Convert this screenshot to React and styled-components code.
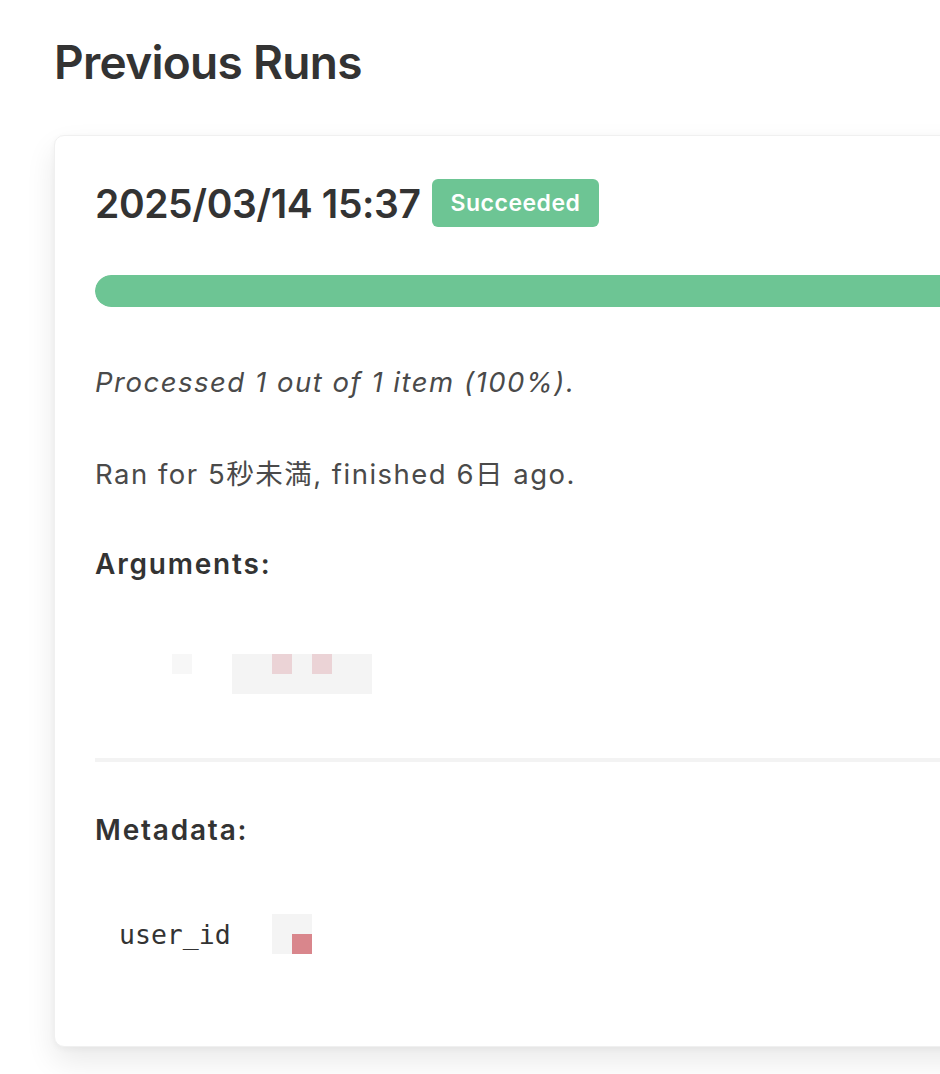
import React from 'react'
import styled, { createGlobalStyle } from 'styled-components'

const GlobalStyle = createGlobalStyle`
  html, body {
    margin: 0;
    padding: 0;
    background: #fff;
  }
  body {
    font-family: Inter, "Noto Sans", "Noto Sans CJK JP", sans-serif;
    color: #333;
    overflow: hidden;
  }
`

const Page = styled.div`
  padding: 0 0 60px 54px;
  overflow: hidden;
`

const PageTitle = styled.h2`
  margin: 0;
  padding-top: 34px;
  font-size: 46px;
  line-height: 56px;
  font-weight: 600;
  letter-spacing: -0.7px;
  color: #333;
`

const Card = styled.section`
  margin-top: 45px;
  width: 1000px;
  padding: 43px 40px 92px;
  background: #fff;
  border: 1px solid #f0f0f0;
  border-radius: 10px;
  box-shadow: 0 14px 30px rgba(0, 0, 0, 0.09), 0 2px 6px rgba(0, 0, 0, 0.04);
  box-sizing: border-box;
`

const RunHeader = styled.div`
  display: flex;
  align-items: center;
  gap: 11px;
`

const RunTime = styled.h3`
  margin: 0;
  font-size: 39px;
  font-weight: 600;
  letter-spacing: -0.4px;
  color: #333;
`

const StatusBadge = styled.span`
  display: inline-flex;
  align-items: center;
  height: 48px;
  padding: 0 19px;
  border-radius: 6px;
  background: ${p => p.$color};
  color: #fff;
  font-size: 23px;
  font-weight: 600;
  letter-spacing: 0.5px;
`

const ProgressTrack = styled.div`
  margin-top: 48px;
  height: 32px;
  border-radius: 16px;
  background: #eee;
  overflow: hidden;
`

const ProgressFill = styled.div`
  height: 100%;
  background: #6dc594;
  border-radius: 16px;
`

const Summary = styled.p`
  margin: ${p => p.$top}px 0 0;
  font-size: 27.5px;
  line-height: 36px;
  letter-spacing: 1.5px;
  font-style: ${p => (p.$italic ? 'italic' : 'normal')};
  color: #4a4a4a;
`

const SectionLabel = styled.h4`
  margin: ${p => p.$top}px 0 0;
  font-size: 28px;
  line-height: 36px;
  font-weight: 600;
  letter-spacing: 1.8px;
  color: #333;
`

const ArgsRow = styled.div`
  display: flex;
  align-items: flex-start;
  gap: 40px;
  margin-top: 72px;
  padding-left: 77px;
`

const Redacted = styled.span`
  display: inline-block;
  width: ${p => p.$w}px;
  height: ${p => p.$h}px;
  background: ${p => p.$color};
`

const CodeBlock = styled.div`
  display: flex;
  gap: 20px;
  width: 140px;
  height: 40px;
  padding-left: 40px;
  box-sizing: border-box;
  background: #f4f4f4;
`

const Divider = styled.hr`
  margin: 64px 0 0;
  height: 4px;
  border: 0;
  background: #f3f3f3;
`

const MetaRow = styled.div`
  display: flex;
  align-items: center;
  gap: 41px;
  margin-top: 66px;
  padding-left: 24px;
`

const MetaKey = styled.code`
  font-family: "DejaVu Sans Mono", "Liberation Mono", monospace;
  font-size: 26.5px;
  color: #333;
`

const MetaValue = styled.div`
  display: flex;
  align-items: flex-end;
  justify-content: flex-end;
  width: 40px;
  height: 40px;
  background: #f4f4f4;
`

export default function App() {
  const processed = 1
  const total = 1
  const pct = Math.round((processed / total) * 100)

  return (
    <Page>
      <GlobalStyle />
      <PageTitle>Previous Runs</PageTitle>
      <Card>
        <RunHeader>
          <RunTime>2025/03/14 15:37</RunTime>
          <StatusBadge $color="#6dc594">Succeeded</StatusBadge>
        </RunHeader>
        <ProgressTrack>
          <ProgressFill style={{ width: `${pct}%` }} />
        </ProgressTrack>
        <Summary $italic $top={57}>
          Processed {processed} out of {total} item ({pct}%).
        </Summary>
        <Summary $top={56}>Ran for 5秒未満, finished 6日 ago.</Summary>
        <SectionLabel $top={54}>Arguments:</SectionLabel>
        <ArgsRow>
          <Redacted $w={20} $h={20} $color="#f7f7f7" />
          <CodeBlock>
            <Redacted $w={20} $h={20} $color="#ebd3d6" />
            <Redacted $w={20} $h={20} $color="#ebd3d6" />
          </CodeBlock>
        </ArgsRow>
        <Divider />
        <SectionLabel $top={50}>Metadata:</SectionLabel>
        <MetaRow>
          <MetaKey>user_id</MetaKey>
          <MetaValue>
            <Redacted $w={20} $h={20} $color="#d9868c" />
          </MetaValue>
        </MetaRow>
      </Card>
    </Page>
  )
}
